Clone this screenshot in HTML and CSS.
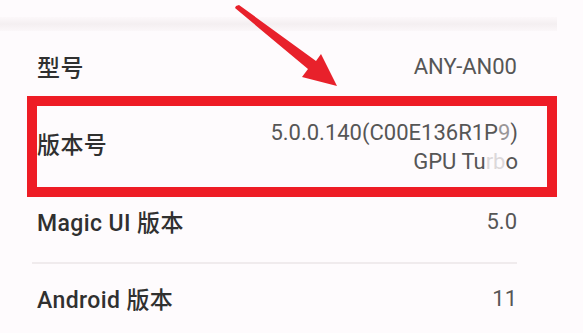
FILE: index.html
```html
<!DOCTYPE html>
<html lang="zh">
<head>
<meta charset="utf-8">
<title>关于手机</title>
<link rel="stylesheet" href="styles.css">
</head>
<body>
<div class="page">
  <div class="band"></div>
  <div class="list">
    <div class="row row-model">
      <span class="label">型号</span>
      <span class="value">ANY-AN00</span>
    </div>
    <div class="row row-build highlight">
      <span class="label label-build">版本号</span>
      <div class="value multi">
        <div>5.0.0.140(C00E136R1P<span class="faded-soft">9</span>)</div>
        <div>GPU Tu<span class="faded">rb</span>o</div>
      </div>
    </div>
    <div class="row row-magic">
      <span class="label">Magic UI 版本</span>
      <span class="value">5.0</span>
    </div>
    <div class="divider"></div>
    <div class="row row-android">
      <span class="label">Android 版本</span>
      <span class="value">11</span>
    </div>
  </div>
  <svg class="arrow" viewBox="230 0 112 92" width="112" height="92" aria-hidden="true">
    <polygon fill="#e8212b" points="236,6 239,5 316,61 321,54 337,86 302,77 308,69 235,8"/>
  </svg>
</div>
</body>
</html>
```

FILE: styles.css
```css
html, body {
  margin: 0;
  padding: 0;
  background: #fefbfd;
}

.page {
  position: relative;
  width: 583px;
  height: 333px;
  overflow: hidden;
  font-family: Roboto, "Noto Sans CJK SC", sans-serif;
}

.band {
  margin-top: 17px;
  width: 557px;
  height: 14px;
  background: linear-gradient(to bottom, #fcf8fa, #f4eff1 50%, #fbf7f9);
}

.list {
  margin-left: 27px;
  width: 530px;
}

.row {
  display: flex;
  align-items: center;
  justify-content: space-between;
  box-sizing: border-box;
  border: 10px solid transparent;
  border-top-width: 0;
  border-bottom-width: 0;
  padding-right: 30px;
}

.row.highlight {
  border: 10px solid #ee1c25;
  padding-right: 29px;
}

.label {
  font-size: 23px;
  font-weight: 500;
  color: #303030;
  letter-spacing: 0.4px;
}

.label-build {
  padding-bottom: 8px;
}

.value {
  font-size: 22px;
  color: #565656;
  text-align: right;
}

.multi {
  display: flex;
  flex-direction: column;
  align-items: flex-end;
  line-height: 29px;
}

.faded {
  color: #dcd8da;
}

.faded-soft {
  color: #9a9698;
}

.row-model {
  height: 65px;
  padding-top: 5px;
}

.row-build {
  height: 101px;
}

.row-magic {
  height: 65px;
  padding-bottom: 17px;
}

.divider {
  margin-left: 5px;
  width: 485px;
  height: 2px;
  background: #f0ebed;
}

.row-android {
  height: 70px;
  padding-bottom: 2px;
}

.arrow {
  position: absolute;
  left: 230px;
  top: 0;
}
```
